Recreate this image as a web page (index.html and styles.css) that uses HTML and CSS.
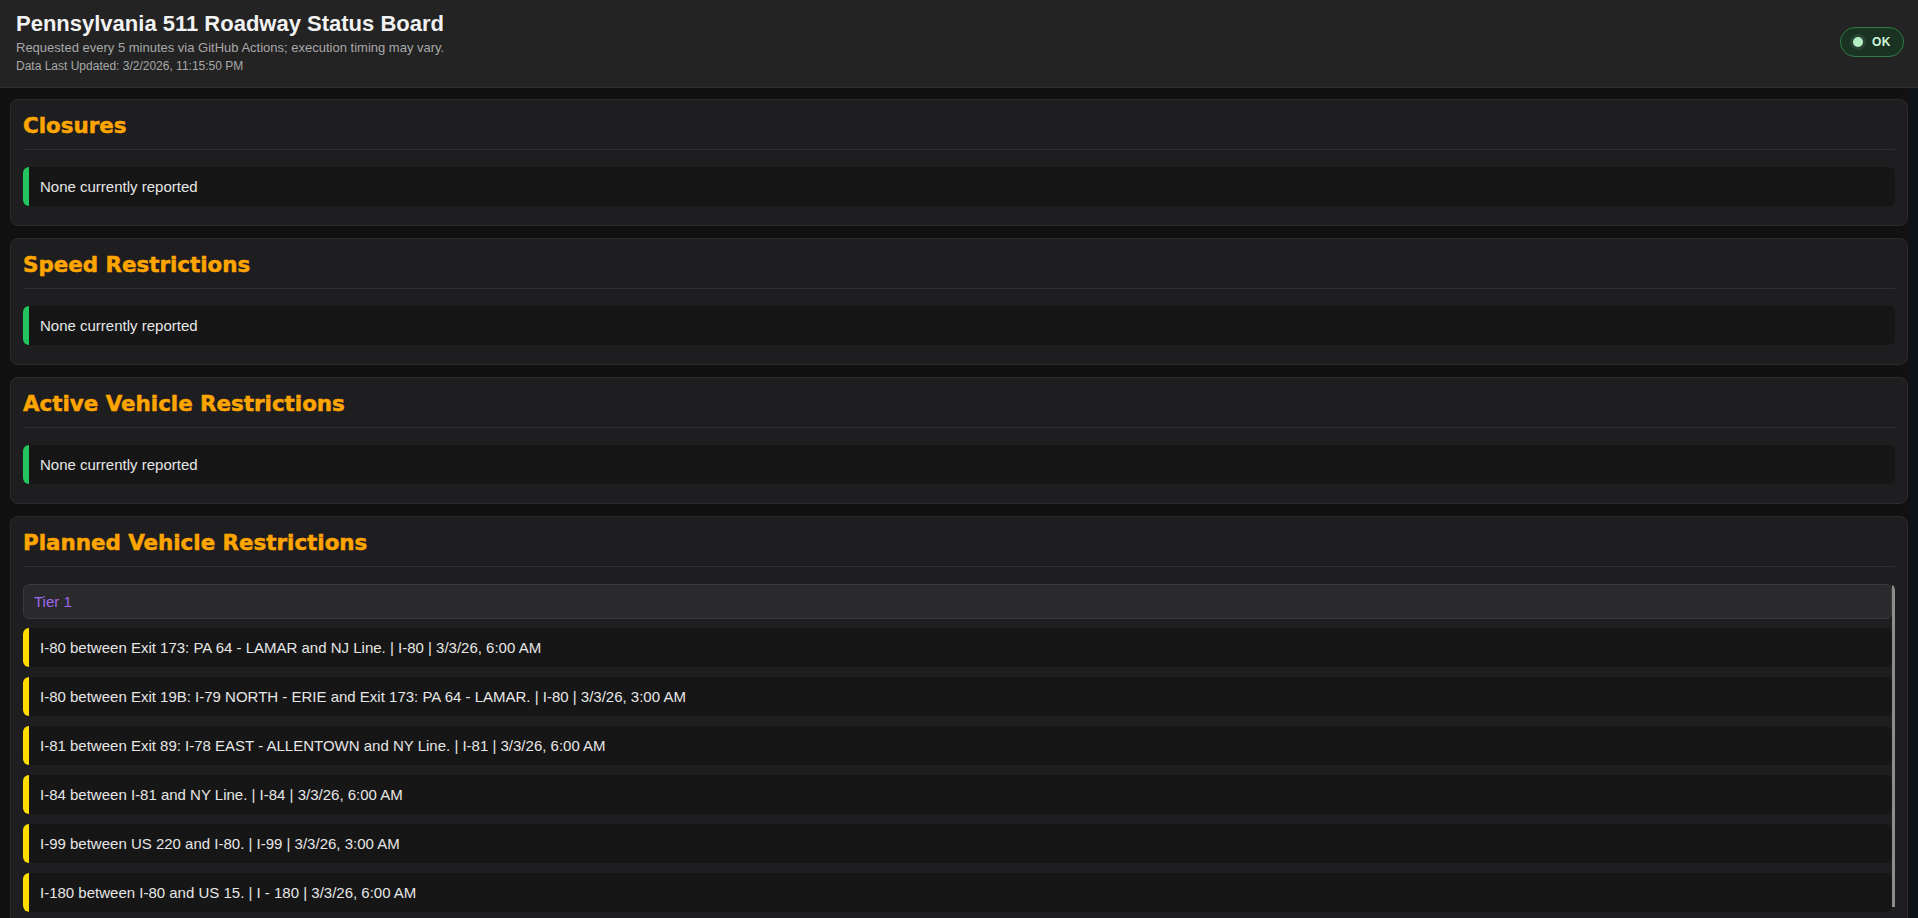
FILE: index.html
```html
<!DOCTYPE html>
<html lang="en">
<head>
    <meta charset="UTF-8">
    <meta name="viewport" content="width=device-width, initial-scale=1.0">
    <title>Pennsylvania 511 Roadway Status Board</title>
    <link rel="stylesheet" href="styles.css">
</head>
<body>
    <div class="header">
        <div class="header-text">
            <h1>Pennsylvania 511 Roadway Status Board</h1>
            <p class="subtitle">Requested every 5 minutes via GitHub Actions; execution timing may vary.</p>
            <p class="updated" id="updated">Data Last Updated: 3/2/2026, 11:15:50 PM</p>
        </div>
        <div class="status-pill" id="status-pill">
            <span class="status-dot"></span>
            OK
        </div>
    </div>

    <div class="board">
        <div class="panel">
            <h2>Closures</h2>
            <div class="item ok">None currently reported</div>
        </div>

        <div class="panel">
            <h2>Speed Restrictions</h2>
            <div class="item ok">None currently reported</div>
        </div>

        <div class="panel">
            <h2>Active Vehicle Restrictions</h2>
            <div class="item ok">None currently reported</div>
        </div>

        <div class="panel">
            <h2>Planned Vehicle Restrictions</h2>
            <div class="restriction-list">
                <div class="tier">Tier 1</div>
                <div class="item warn">I-80 between Exit 173: PA 64 - LAMAR and NJ Line. | I-80 | 3/3/26, 6:00 AM</div>
                <div class="item warn">I-80 between Exit 19B: I-79 NORTH - ERIE and Exit 173: PA 64 - LAMAR. | I-80 | 3/3/26, 3:00 AM</div>
                <div class="item warn">I-81 between Exit 89: I-78 EAST - ALLENTOWN and NY Line. | I-81 | 3/3/26, 6:00 AM</div>
                <div class="item warn">I-84 between I-81 and NY Line. | I-84 | 3/3/26, 6:00 AM</div>
                <div class="item warn">I-99 between US 220 and I-80. | I-99 | 3/3/26, 3:00 AM</div>
                <div class="item warn">I-180 between I-80 and US 15. | I - 180 | 3/3/26, 6:00 AM</div>
            </div>
        </div>
    </div>

    <div class="scroll-rail"></div>
</body>
</html>
```

FILE: styles.css
```css
html {
    overflow: hidden;
}
body {
    font-family: "Liberation Sans", Arial, sans-serif;
    background-color: #111111;
    color: #e6e6e6;
    margin: 0;
    padding: 0;
}
.header {
    display: flex;
    justify-content: space-between;
    align-items: center;
    background-color: #232323;
    border-bottom: 1px solid #2e2e2e;
    padding: 11px 14px 14px 16px;
}
.header h1 {
    margin: 0 0 4px;
    font-size: 22px;
    line-height: 25px;
    font-weight: bold;
    color: #f2f2f2;
}
.subtitle {
    margin: 0;
    font-size: 13px;
    line-height: 15px;
    color: #a8a8a8;
}
.updated {
    margin: 4px 0 0;
    font-size: 12px;
    line-height: 14px;
    color: #a8a8a8;
}
.status-pill {
    display: flex;
    align-items: center;
    gap: 9px;
    height: 30px;
    box-sizing: border-box;
    padding: 0 12px;
    background: #1a3222;
    border: 1px solid #2e7d46;
    border-radius: 16px;
    color: #cdf7d9;
    font-size: 12px;
    font-weight: bold;
    letter-spacing: 0.5px;
}
.status-dot {
    width: 10px;
    height: 10px;
    border-radius: 50%;
    background: #b4f0c2;
    box-shadow: 0 0 0 3px rgba(180, 240, 194, 0.1);
}
.board {
    display: flex;
    flex-direction: column;
    gap: 12px;
    padding: 11px 10px;
}
.panel {
    background: #1e1e20;
    border: 1px solid #2b2b2d;
    border-radius: 8px;
    padding: 13px 12px 19px;
}
.panel h2 {
    margin: 0 0 17px;
    padding-bottom: 10px;
    border-bottom: 1px solid #2e2e30;
    font-family: "DejaVu Sans", Arial, sans-serif;
    font-size: 21.4px;
    line-height: 26px;
    font-weight: bold;
    color: #ffa500;
    -webkit-text-stroke: 0.5px #ffa500;
}
.item {
    background: #161616;
    border-left: 6px solid #22c55e;
    border-radius: 6px;
    padding: 11px 14px 11px 11px;
    font-size: 15px;
    line-height: 17px;
    color: #e6e6e6;
}
.item.warn {
    border-left-color: #ffdd00;
}
/* thin scroll thumb drawn on the list's right edge */
.restriction-list {
    max-height: 328px;
    box-sizing: border-box;
    overflow-y: auto;
    padding-right: 3px;
    padding-bottom: 6px;
    border-radius: 6px;
    background: linear-gradient(#8d8d8d, #8d8d8d) right 1px / 3px 322px no-repeat;
    scrollbar-width: none;
}
.restriction-list .item + .item {
    margin-top: 10px;
}
.tier {
    background: #2a2a2c;
    border: 1px solid #3a3a3c;
    border-radius: 6px;
    padding: 8px 10px;
    margin-bottom: 9px;
    font-size: 15px;
    line-height: 17px;
    color: #a066f0;
}
.scroll-rail {
    position: fixed;
    top: 88px;
    right: 0;
    width: 8px;
    height: 100%;
    background: #0e1319;
}
```
